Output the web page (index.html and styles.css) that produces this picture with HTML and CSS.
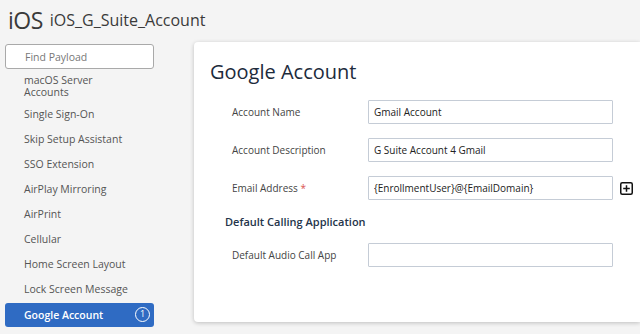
FILE: index.html
```html
<!DOCTYPE html>
<html lang="en">
<head>
    <meta charset="UTF-8">
    <meta name="viewport" content="width=device-width, initial-scale=1.0">
    <title>iOS_G_Suite_Account</title>
    <link rel="stylesheet" href="styles.css">
</head>
<body>
    <header class="top-bar">
        <span class="platform">iOS</span>
        <span class="profile-name">iOS_G_Suite_Account</span>
    </header>

    <div class="layout">
        <aside class="sidebar">
            <input type="text" class="search" placeholder="Find Payload">
            <ul class="payload-list">
                <li class="payload two-line">macOS Server<br>Accounts</li>
                <li class="payload">Single Sign-On</li>
                <li class="payload">Skip Setup Assistant</li>
                <li class="payload">SSO Extension</li>
                <li class="payload">AirPlay Mirroring</li>
                <li class="payload">AirPrint</li>
                <li class="payload">Cellular</li>
                <li class="payload">Home Screen Layout</li>
                <li class="payload">Lock Screen Message</li>
                <li class="payload active">Google Account <span class="badge">1</span></li>
            </ul>
        </aside>

        <main class="panel">
            <h1>Google Account</h1>
            <div class="form-row">
                <label for="accountName">Account Name</label>
                <input type="text" id="accountName" value="Gmail Account">
            </div>
            <div class="form-row">
                <label for="accountDesc">Account Description</label>
                <input type="text" id="accountDesc" value="G Suite Account 4 Gmail">
            </div>
            <div class="form-row">
                <label for="email">Email Address <span class="required">*</span></label>
                <input type="text" id="email" value="{EnrollmentUser}@{EmailDomain}">
                <span class="add-btn">
                    <svg width="13" height="13" viewBox="0 0 13 13">
                        <rect x="0.75" y="0.75" width="11.5" height="11.5" rx="1.5" fill="none" stroke="#111" stroke-width="1.5"/>
                        <path d="M6.5 3.2v6.6M3.2 6.5h6.6" stroke="#111" stroke-width="1.5"/>
                    </svg>
                </span>
            </div>
            <h2>Default Calling Application</h2>
            <div class="form-row">
                <label for="audioApp">Default Audio Call App</label>
                <input type="text" id="audioApp">
            </div>
        </main>
    </div>
</body>
</html>
```

FILE: styles.css
```css
body {
    margin: 0;
    font-family: "Open Sans", Arial, sans-serif;
    background-color: #f4f4f4;
    color: #444;
    height: 334px;
    overflow: hidden;
}
.top-bar {
    height: 40px;
    display: flex;
    align-items: center;
    padding-left: 8px;
    gap: 7px;
}
.platform {
    font-size: 23px;
    color: #3a3a3a;
    letter-spacing: -0.5px;
}
.profile-name {
    font-size: 16px;
    color: #3a3a3a;
}
.layout {
    display: flex;
}
.sidebar {
    width: 149px;
    padding-left: 5px;
    flex-shrink: 0;
}
.search {
    display: block;
    box-sizing: border-box;
    width: 149px;
    height: 25px;
    margin-top: 4px;
    padding: 0 0 0 19px;
    border: 1px solid #a9a9a9;
    border-radius: 3px;
    background: #fff;
    font-family: inherit;
    font-size: 10.5px;
    color: #555;
}
.search::placeholder {
    color: #777;
}
.payload-list {
    list-style: none;
    margin: 0;
    padding: 0;
}
.payload {
    height: 25px;
    line-height: 25px;
    padding-left: 19px;
    font-size: 10.5px;
    color: #555;
    position: relative;
}
.payload.two-line {
    height: 33px;
    line-height: 12px;
    box-sizing: border-box;
    display: flex;
    align-items: center;
}
.payload.active {
    height: 24px;
    line-height: 24px;
    margin-top: 1px;
    background-color: #2f6bc3;
    border-radius: 3px;
    color: #fff;
    font-weight: 600;
}
.badge {
    position: absolute;
    right: 4px;
    top: 4px;
    width: 15px;
    height: 15px;
    box-sizing: border-box;
    border: 1.5px solid #fff;
    border-radius: 50%;
    font-size: 9px;
    line-height: 12px;
    text-align: center;
    font-weight: 400;
}
.panel {
    flex: 1;
    margin: 2px 0 0 40px;
    height: 280px;
    box-sizing: border-box;
    background: #fff;
    border-radius: 4px 0 0 4px;
    box-shadow: 0 1px 4px rgba(0, 0, 0, 0.22);
    padding: 16px 0 0 16px;
}
.panel h1 {
    margin: 0 0 14px;
    font-size: 20px;
    line-height: 28px;
    font-weight: 400;
    color: #1d2b3c;
}
.form-row {
    display: flex;
    align-items: center;
    margin-bottom: 14px;
}
.form-row label {
    width: 136px;
    padding-left: 22px;
    flex-shrink: 0;
    font-size: 10px;
    color: #444;
}
.required {
    color: #d9534f;
}
.form-row input {
    box-sizing: border-box;
    width: 245px;
    height: 24px;
    border: 1px solid #c5ccd6;
    border-radius: 1px;
    padding: 0 5px;
    font-family: inherit;
    font-size: 10px;
    color: #222;
}
.add-btn {
    display: flex;
    margin-left: 7px;
}
.panel h2 {
    margin: 0 0 13px 15px;
    font-size: 11px;
    font-weight: 600;
    color: #24344a;
    height: 16px;
    line-height: 16px;
}
```
